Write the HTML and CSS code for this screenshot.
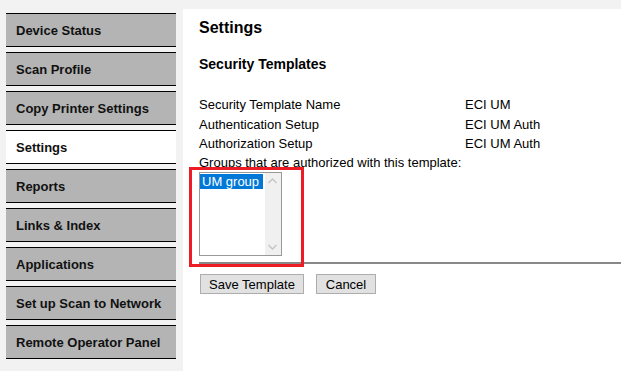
FILE: index.html
```html
<!DOCTYPE html>
<html lang="en">
<head>
    <meta charset="UTF-8">
    <meta name="viewport" content="width=device-width, initial-scale=1.0">
    <title>Settings - Security Templates</title>
    <link rel="stylesheet" href="styles.css">
</head>
<body>
    <div class="page">
        <nav class="sidebar">
            <a class="nav-item" href="#">Device Status</a>
            <a class="nav-item" href="#">Scan Profile</a>
            <a class="nav-item" href="#">Copy Printer Settings</a>
            <a class="nav-item active" href="#">Settings</a>
            <a class="nav-item" href="#">Reports</a>
            <a class="nav-item" href="#">Links &amp; Index</a>
            <a class="nav-item" href="#">Applications</a>
            <a class="nav-item" href="#">Set up Scan to Network</a>
            <a class="nav-item" href="#">Remote Operator Panel</a>
        </nav>

        <main class="content">
            <h1 class="title">Settings</h1>
            <h2 class="subtitle">Security Templates</h2>

            <div class="fields">
                <span>Security Template Name</span><span>ECI UM</span>
                <span>Authentication Setup</span><span>ECI UM Auth</span>
                <span>Authorization Setup</span><span>ECI UM Auth</span>
            </div>
            <div class="groups-label">Groups that are authorized with this template:</div>

            <div class="group-box">
                <div class="listbox">
                    <div class="options">
                        <div class="option selected">UM group</div>
                    </div>
                    <div class="scrollbar">
                        <svg width="16" height="16" viewBox="0 0 16 16"><polyline points="3.5,10 7.5,6 11.5,10" fill="none" stroke="#c4c4c4" stroke-width="1.3"/></svg>
                        <svg width="16" height="16" viewBox="0 0 16 16"><polyline points="3.5,6 7.5,10 11.5,6" fill="none" stroke="#c4c4c4" stroke-width="1.3"/></svg>
                    </div>
                </div>
                <div class="highlight"></div>
            </div>

            <hr class="divider">

            <div class="actions">
                <button class="btn btn-save">Save Template</button>
                <button class="btn btn-cancel">Cancel</button>
            </div>
        </main>
    </div>
</body>
</html>
```

FILE: styles.css
```css
html, body {
    height: 100%;
}

body {
    margin: 0;
    background-color: #f2f2f2;
    font-family: "Liberation Sans", Arial, sans-serif;
    font-size: 13px;
    color: #000;
}

.page {
    display: flex;
    min-height: 100%;
}

/* left menu */
.sidebar {
    width: 170px;
    margin-left: 6px;
    padding-top: 13px;
    display: flex;
    flex-direction: column;
    gap: 5px;
    flex-shrink: 0;
}

.nav-item {
    display: block;
    height: 30px;
    line-height: 30px;
    padding: 2px 0 0 10px;
    background-color: #b4b4b4;
    border-top: 1px solid #000;
    border-bottom: 1px solid #000;
    color: #111;
    font-weight: bold;
    font-size: 13px;
    text-decoration: none;
    white-space: nowrap;
}

.nav-item.active {
    background-color: #fff;
}

/* main panel */
.content {
    flex: 1;
    margin: 9px 0 0 7px;
    padding: 10px 0 0 16px;
    background-color: #fff;
}

.title {
    margin: 0;
    font-size: 16px;
    line-height: 18px;
}

.subtitle {
    margin: 19px 0 0;
    font-size: 14px;
    line-height: 16px;
}

.fields {
    display: grid;
    grid-template-columns: 266px auto;
    margin-top: 23px;
    line-height: 19.5px;
}

.groups-label {
    line-height: 18.5px;
}

.group-box {
    position: relative;
    width: 83px;
}

.listbox {
    display: flex;
    height: 82px;
    border: 1px solid #999;
    background: #fff;
}

.options {
    flex: 1;
    padding: 1px 2px 0 0;
}

.option {
    height: 15px;
    line-height: 15px;
    padding-left: 2px;
}

.option.selected {
    background-color: #0078d7;
    color: #fff;
}

.scrollbar {
    width: 16px;
    background-color: #f0f0f0;
    display: flex;
    flex-direction: column;
    justify-content: space-between;
}

.scrollbar svg {
    display: block;
}

/* red annotation frame */
.highlight {
    position: absolute;
    left: -10px;
    top: -5px;
    width: 115px;
    height: 100px;
    box-sizing: border-box;
    border: 3px solid #ed1c24;
}

.divider {
    margin: 6px 0 0;
    border: none;
    border-top: 2px solid #888;
    height: 0;
}

.actions {
    display: flex;
    gap: 12px;
    margin-top: 10px;
    padding-left: 1px;
}

.btn {
    height: 20px;
    padding: 0;
    background-color: #e1e1e1;
    border: 1px solid #adadad;
    font-family: "Liberation Sans", Arial, sans-serif;
    font-size: 13px;
    color: #000;
}

.btn-save {
    width: 104px;
}

.btn-cancel {
    width: 60px;
}
```
